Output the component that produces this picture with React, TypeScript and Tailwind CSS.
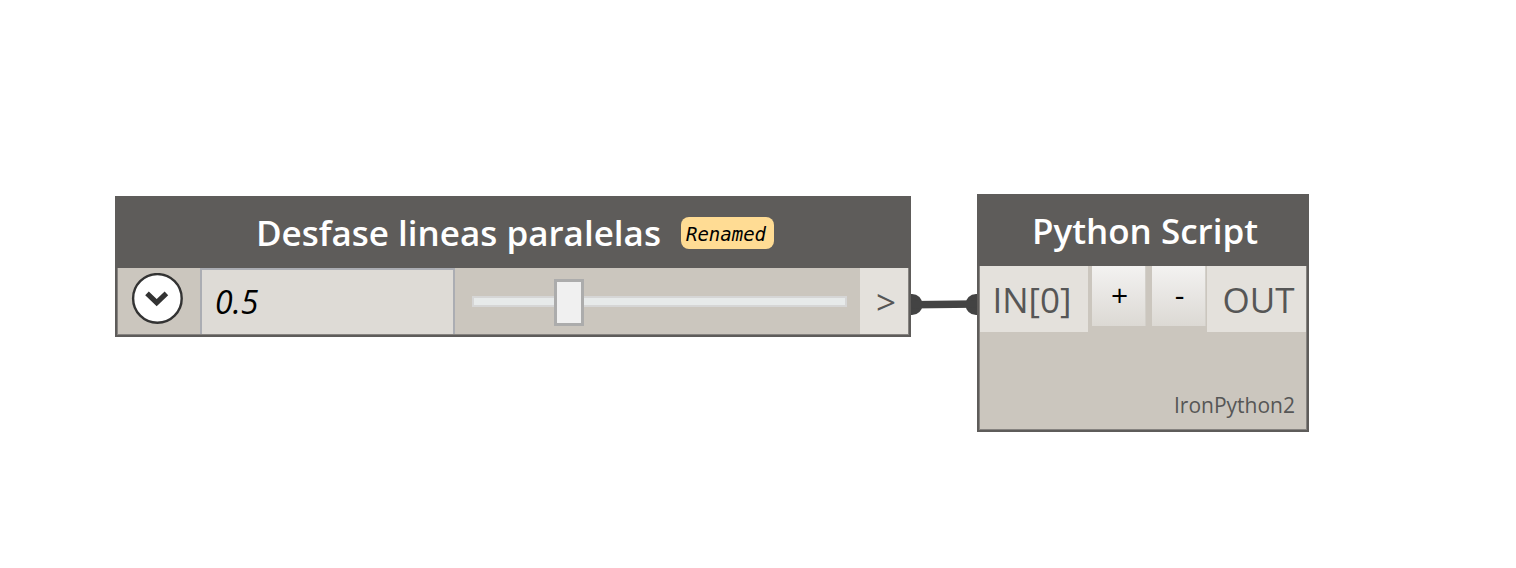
import { useState } from "react";
import type { ReactNode } from "react";

type NodeProps = {
  title: string;
  badge?: string;
  className: string;
  children: ReactNode;
};

function GraphNode({ title, badge, className, children }: NodeProps) {
  return (
    <section
      className={`absolute flex flex-col border-2 border-[#5e5c5a] bg-[#5e5c5a] ${className}`}
    >
      <header className="flex h-[70px] items-center justify-center gap-5 pl-1 text-white">
        <h2 className="text-[35px] leading-[48px] font-semibold whitespace-nowrap">{title}</h2>
        {badge && (
          <span className="flex h-8 items-center rounded-lg bg-[#ffdc94] pt-0.5 pr-2 pl-[5px] font-['DejaVu_Sans_Mono',monospace] text-[19px] text-black italic">
            {badge}
          </span>
        )}
      </header>
      <div className="flex flex-1 flex-col border-x border-b border-[#868380] bg-[#cbc6be]">
        {children}
      </div>
    </section>
  );
}

function ChevronIcon() {
  return (
    <svg viewBox="0 0 52 52" className="size-[52px]" aria-hidden="true">
      <circle cx="26.4" cy="25.4" r="24.3" fill="#ffffff" stroke="#333333" strokeWidth="2.4" />
      <path d="M16 20.4 L25.7 29.6 L35.4 20.4" fill="none" stroke="#333333" strokeWidth="5.2" />
    </svg>
  );
}

function Wire() {
  return (
    <svg viewBox="0 0 66 24" className="absolute top-[292px] left-[911px] h-6 w-[66px]" aria-hidden="true">
      <circle cx="1" cy="12.5" r="10.5" fill="#434343" />
      <circle cx="65" cy="12.5" r="10.5" fill="#434343" />
      <path d="M1 12.8 L65 12" stroke="#434343" strokeWidth="7.6" />
    </svg>
  );
}

const port = "flex h-[66px] items-center justify-center bg-[#e4e1dc] pt-0.5 text-[35px] text-[#565656]";

const stepButton =
  "h-[60px] border-r border-[#d3d0ca] bg-linear-to-b from-[#f3f2f1] to-[#dcd9d4] pb-0.5 pl-0.5 text-[30px] leading-none text-black";

export default function App() {
  const [value, setValue] = useState("0.5");

  return (
    <main className="relative min-h-screen overflow-hidden bg-white font-['Open_Sans',sans-serif]">
      <GraphNode
        title="Desfase lineas paralelas"
        badge="Renamed"
        className="top-[196px] left-[115px] w-[796px]"
      >
        <div className="flex h-[66px]">
          <div className="flex w-[82px] items-center justify-center pr-1 pb-1">
            <button type="button" aria-label="Expand" className="size-[52px] rounded-full">
              <ChevronIcon />
            </button>
          </div>
          <input
            type="text"
            aria-label="Value"
            value={value}
            onChange={(e) => setValue(e.target.value)}
            className="w-[255px] border-2 border-b-0 border-[#abadb3] bg-[#dedbd6] px-[13px] text-[32px] text-black italic outline-none"
          />
          <div className="flex flex-1 items-center pr-[13px] pl-[17px]">
            <input
              type="range"
              aria-label="Offset"
              min="0"
              max="2.14"
              step="0.01"
              value={value}
              onChange={(e) => setValue(e.target.value)}
              className="h-[47px] w-full appearance-none bg-transparent [&::-webkit-slider-runnable-track]:h-[11px] [&::-webkit-slider-runnable-track]:border-2 [&::-webkit-slider-runnable-track]:border-[#d6d6d6] [&::-webkit-slider-runnable-track]:bg-[#e7eaea] [&::-webkit-slider-thumb]:-mt-[19px] [&::-webkit-slider-thumb]:h-[47px] [&::-webkit-slider-thumb]:w-[30px] [&::-webkit-slider-thumb]:appearance-none [&::-webkit-slider-thumb]:border-3 [&::-webkit-slider-thumb]:border-[#acacac] [&::-webkit-slider-thumb]:bg-[#f0f0f0]"
            />
          </div>
          <div className={`w-12 pl-1 ${port}`}>&gt;</div>
        </div>
      </GraphNode>

      <GraphNode title="Python Script" className="top-[194px] left-[977px] w-[332px]">
        <div className="flex items-start">
          <div className={`w-[108px] pr-1 ${port}`}>IN[0]</div>
          <div className="flex flex-1 gap-1.5 pl-1">
            <button type="button" aria-label="Add input" className={`w-[54px] ${stepButton}`}>
              +
            </button>
            <button type="button" aria-label="Remove input" className={`w-[54px] ${stepButton}`}>
              -
            </button>
          </div>
          <div className={`w-[99px] pl-1 ${port}`}>OUT</div>
        </div>
        <p className="pt-[58px] pr-[11px] pb-[9px] text-right text-[21px] leading-[30px] text-[#565656]">
          IronPython2
        </p>
      </GraphNode>

      <Wire />
    </main>
  );
}
